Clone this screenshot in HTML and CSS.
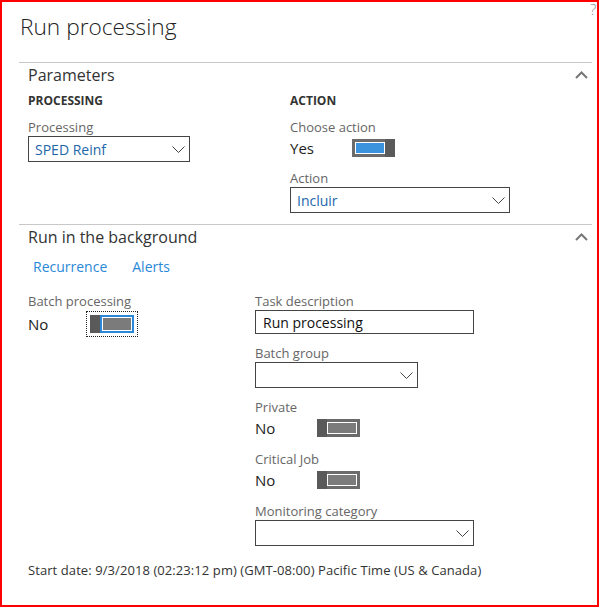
FILE: index.html
```html
<!DOCTYPE html>
<html lang="en">
<head>
<meta charset="utf-8">
<title>Run processing</title>
<link rel="stylesheet" href="styles.css">
</head>
<body>
<div class="frame">
  <span class="help">?</span>
  <h1 class="title">Run processing</h1>

  <section class="section">
    <div class="section-head">
      <h2 class="section-title">Parameters</h2>
      <svg class="chev-up" width="13" height="8" viewBox="0 0 13 8"><path d="M1 7 L6.5 1.5 L12 7" fill="none" stroke="#777" stroke-width="2"/></svg>
    </div>
    <div class="params">
      <div class="col">
        <div class="group-title">PROCESSING</div>
        <div class="field">
          <div class="label">Processing</div>
          <div class="select w-proc"><span>SPED Reinf</span><svg width="13" height="7" viewBox="0 0 13 7"><path d="M0.5 0.5 L6.5 6.5 L12.5 0.5" fill="none" stroke="#444" stroke-width="1"/></svg></div>
        </div>
      </div>
      <div class="col">
        <div class="group-title">ACTION</div>
        <div class="field">
          <div class="label">Choose action</div>
          <div class="toggle-row">
            <span class="val">Yes</span>
            <span class="toggle on"><span class="track"><span class="track-inner"></span></span><span class="thumb"></span></span>
          </div>
        </div>
        <div class="field">
          <div class="label">Action</div>
          <div class="select w-action"><span>Incluir</span><svg width="13" height="7" viewBox="0 0 13 7"><path d="M0.5 0.5 L6.5 6.5 L12.5 0.5" fill="none" stroke="#444" stroke-width="1"/></svg></div>
        </div>
      </div>
    </div>
  </section>

  <section class="section section-bg">
    <div class="section-head">
      <h2 class="section-title">Run in the background</h2>
      <svg class="chev-up" width="13" height="8" viewBox="0 0 13 8"><path d="M1 7 L6.5 1.5 L12 7" fill="none" stroke="#777" stroke-width="2"/></svg>
    </div>
    <div class="links">
      <a class="link">Recurrence</a>
      <a class="link">Alerts</a>
    </div>
    <div class="bg-grid">
      <div class="col">
        <div class="field">
          <div class="label">Batch processing</div>
          <div class="toggle-row tall">
            <span class="val">No</span>
            <span class="toggle off focus"><span class="thumb"></span><span class="track"><span class="track-inner"></span></span></span>
          </div>
        </div>
      </div>
      <div class="col">
        <div class="field">
          <div class="label">Task description</div>
          <div class="input w-task">Run processing</div>
        </div>
        <div class="field">
          <div class="label">Batch group</div>
          <div class="select w-group"><span></span><svg width="13" height="7" viewBox="0 0 13 7"><path d="M0.5 0.5 L6.5 6.5 L12.5 0.5" fill="none" stroke="#444" stroke-width="1"/></svg></div>
        </div>
        <div class="field">
          <div class="label">Private</div>
          <div class="toggle-row">
            <span class="val">No</span>
            <span class="toggle off"><span class="thumb"></span><span class="track"><span class="track-inner"></span></span></span>
          </div>
        </div>
        <div class="field">
          <div class="label">Critical Job</div>
          <div class="toggle-row">
            <span class="val">No</span>
            <span class="toggle off"><span class="thumb"></span><span class="track"><span class="track-inner"></span></span></span>
          </div>
        </div>
        <div class="field">
          <div class="label">Monitoring category</div>
          <div class="select w-mon"><span></span><svg width="13" height="7" viewBox="0 0 13 7"><path d="M0.5 0.5 L6.5 6.5 L12.5 0.5" fill="none" stroke="#444" stroke-width="1"/></svg></div>
        </div>
      </div>
    </div>
  </section>

  <p class="start">Start date: 9/3/2018 (02:23:12 pm) (GMT-08:00) Pacific Time (US &amp; Canada)</p>
</div>
</body>
</html>
```

FILE: styles.css
```css
* { box-sizing: border-box; }
html, body { margin: 0; padding: 0; }
body {
  width: 601px;
  height: 607px;
  overflow: hidden;
  background: #fff;
  font-family: "Open Sans", "Noto Sans", sans-serif;
  color: #333;
}
.frame {
  position: relative;
  width: 599px;
  height: 607px;
  border: 2px solid #f00;
}
.help {
  position: absolute;
  left: 588px;
  top: -1px;
  font-size: 15px;
  font-weight: 300;
  line-height: 16px;
  color: #888;
}
.title {
  margin: 9px 0 0 18px;
  font-size: 22.7px;
  font-weight: 300;
  line-height: 32px;
  color: #222;
}
.section {
  margin: 19px 5px 0 17px;
  border-top: 1px solid #c8c8c8;
}
.section-bg { margin-top: 0; }
.section-head {
  display: flex;
  justify-content: space-between;
  align-items: center;
  padding: 2px 4px 0 9px;
}
.section-title {
  margin: 0;
  font-size: 16px;
  font-weight: 400;
  line-height: 20px;
  color: #333;
}
.params {
  display: grid;
  grid-template-columns: 262px 1fr;
  padding: 8px 0 11px 9px;
}
.group-title {
  font-size: 12px;
  font-weight: 700;
  line-height: 16px;
  color: #333;
  margin-bottom: 10px;
}
.field { margin-bottom: 10px; }
.field:last-child { margin-bottom: 0; }
.bg-grid .field { margin-bottom: 11px; }
.bg-grid .field:last-child { margin-bottom: 0; }
.label {
  font-size: 13px;
  line-height: 16px;
  color: #666;
  margin-bottom: 1px;
}
.select {
  display: flex;
  align-items: center;
  justify-content: space-between;
  height: 26px;
  border: 1px solid #444;
  padding: 0 4px 0 6px;
  font-size: 14px;
  color: #2266aa;
}
.select svg { flex: none; }
.input {
  display: flex;
  align-items: center;
  height: 24px;
  border: 1px solid #444;
  padding: 0 7px;
  font-size: 14px;
  color: #111;
}
.w-proc { width: 162px; }
.w-action { width: 220px; }
.w-task { width: 219px; }
.w-group { width: 163px; }
.w-mon { width: 219px; }

.toggle-row {
  display: flex;
  align-items: center;
  height: 24px;
}
.toggle-row.tall { height: 28px; }
.val {
  width: 62px;
  font-size: 15px;
  line-height: 20px;
  color: #222;
}
.toggle {
  display: flex;
  width: 43px;
  height: 18px;
}
.thumb {
  width: 10px;
  background: #5a5a5a;
}
.track {
  flex: 1;
  display: flex;
  background: #6b6b6b;
}
.track-inner {
  flex: 1;
  border: 1px solid #fff;
}
.toggle.on .track { padding: 3px 0 3px 3px; }
.toggle.on .track-inner { background: #3a93dc; }
.toggle.off .track { padding: 3px 3px 3px 0; }
.toggle.off .track-inner { background: #7b7b7b; }
.toggle.focus {
  width: 44px;
  outline: 1px dotted #222;
  outline-offset: 3px;
}
.toggle.focus .track { background: #2b88d8; padding: 2px; }

.links {
  display: flex;
  gap: 25px;
  margin-top: 10px;
  padding-left: 14px;
}
.link {
  font-size: 14px;
  line-height: 20px;
  color: #2b88d8;
  text-decoration: none;
}
.bg-grid {
  display: grid;
  grid-template-columns: 227px 1fr;
  margin-top: 16px;
  padding-left: 9px;
}
.start {
  margin: 16px 0 0 26px;
  font-size: 13px;
  line-height: 16px;
  letter-spacing: 0.08px;
  color: #333;
}
```
